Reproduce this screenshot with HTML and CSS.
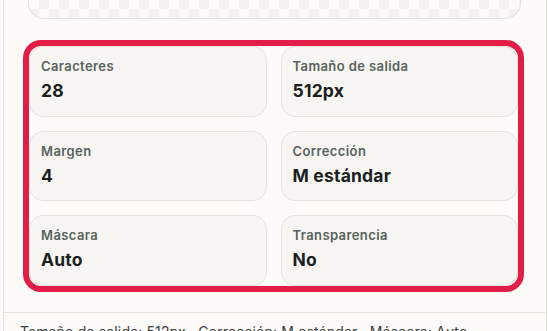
FILE: index.html
```html
<!DOCTYPE html>
<html lang="es">
<head>
<meta charset="utf-8">
<title>Resumen QR</title>
<link rel="stylesheet" href="styles.css">
</head>
<body>
<div class="panel">
  <div class="preview"></div>
  <div class="stats-frame">
    <div class="stats">
      <div class="stat"><div class="stat-label">Caracteres</div><div class="stat-value">28</div></div>
      <div class="stat"><div class="stat-label">Tamaño de salida</div><div class="stat-value">512px</div></div>
      <div class="stat"><div class="stat-label">Margen</div><div class="stat-value">4</div></div>
      <div class="stat"><div class="stat-label">Corrección</div><div class="stat-value">M estándar</div></div>
      <div class="stat"><div class="stat-label">Máscara</div><div class="stat-value">Auto</div></div>
      <div class="stat"><div class="stat-label">Transparencia</div><div class="stat-value">No</div></div>
    </div>
  </div>
  <div class="footer">Tamaño de salida: 512px · Corrección: M estándar · Máscara: Auto</div>
</div>
</body>
</html>
```
FILE: styles.css
```css
* { box-sizing: border-box; }
html, body { margin: 0; padding: 0; }
body {
  background: #fcfbf8;
  font-family: Inter, "Noto Sans", sans-serif;
  height: 331px;
  overflow: hidden;
}
.panel {
  margin-left: 3px;
  width: 544px;
  height: 331px;
  overflow: hidden;
  border-left: 1px solid #e6e3dd;
  border-right: 1px solid #e6e3dd;
  background: #fcfbf8;
}
.preview {
  height: 19px;
  margin: 0 25px 0 24px;
  border: 1px solid #e3e1db;
  border-top: none;
  border-radius: 0 0 16px 16px;
  background-color: #fbfaf7;
  background-image: conic-gradient(#f3f2ee 25%, transparent 0 50%, #f3f2ee 0 75%, transparent 0);
  background-size: 20px 20px;
  background-position: 0 -1px;
}
.stats-frame {
  margin: 21px 22px 0 19px;
  height: 252px;
  border: 6px solid #e11d48;
  border-radius: 18px;
}
.stats {
  height: 100%;
  display: grid;
  grid-template-columns: 1fr 1fr;
  grid-template-rows: repeat(3, 1fr);
  gap: 14px;
}
.stat {
  background: #f7f6f2;
  border: 1px solid #e6e3dd;
  border-radius: 14px;
  padding: 10px 11px;
}
.stat-label {
  font-size: 13px;
  line-height: 18px;
  font-weight: 600;
  letter-spacing: 0.4px;
  color: #58625d;
}
.stat-value {
  margin-top: 4px;
  font-size: 17.5px;
  line-height: 24px;
  font-weight: 700;
  letter-spacing: 0.2px;
  color: #1b1f1d;
}
.footer {
  margin-top: 20px;
  border-top: 1px solid #e6e3dd;
  padding: 10px 16px 0;
  font-size: 14px;
  line-height: 18px;
  letter-spacing: 0.15px;
  white-space: nowrap;
  color: #3b403e;
}
```
